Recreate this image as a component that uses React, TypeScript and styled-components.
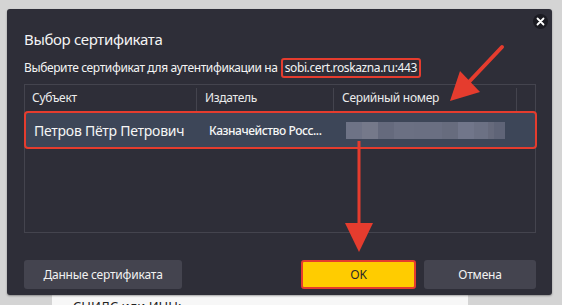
import React from "react";
import styled, { createGlobalStyle } from "styled-components";

const Global = createGlobalStyle`
  html, body { margin: 0; padding: 0; }
  body {
    background: #d4d4d4;
    font-family: "Noto Sans", "Open Sans", sans-serif;
    overflow: hidden;
  }
`;

const Page = styled.div`
  width: 562px;
  height: 305px;
  padding: 9px 0 0 7px;
  box-sizing: border-box;
  display: flex;
  flex-direction: column;
  align-items: flex-start;
`;

const Dialog = styled.div`
  position: relative;
  width: 545px;
  height: 286px;
  box-sizing: border-box;
  background: #2e2e38;
  border-radius: 3px;
  box-shadow: 0 1px 2px rgba(0, 0, 0, 0.35);
  padding: 19px 16px 0 17px;
  display: flex;
  flex-direction: column;
  color: #f2f2f2;
`;

const CloseButton = styled.div`
  position: absolute;
  top: 5px;
  right: 4px;
  width: 15px;
  height: 15px;
  border-radius: 50%;
  background: #1b1b22;
  display: flex;
  align-items: center;
  justify-content: center;
`;

const Title = styled.div`
  font-size: 15px;
  letter-spacing: -0.35px;
  line-height: 22px;
  color: #f4f4f4;
`;

const Subtitle = styled.div`
  margin-top: 8px;
  font-size: 12px;
  letter-spacing: -0.38px;
  line-height: 16px;
  color: #f4f4f4;
  display: flex;
  align-items: center;
  white-space: nowrap;
`;

const Domain = styled.span`
  margin-left: 3px;
  padding: 1px 2px;
  border: 2px solid #e53c2e;
  border-radius: 3px;
  line-height: 14px;
`;

const Table = styled.div`
  margin-top: 6px;
  width: 512px;
  height: 149px;
  box-sizing: border-box;
  border: 1px solid #44444e;
  display: flex;
  flex-direction: column;
`;

const HeaderRow = styled.div`
  display: grid;
  grid-template-columns: 171px 137px 183px 1fr;
  height: 23px;
  align-items: stretch;
  padding-top: 3px;
`;

const HeaderCell = styled.div<{ $first?: boolean }>`
  font-size: 12px;
  letter-spacing: -0.3px;
  line-height: 20px;
  color: #ececec;
  padding-left: ${(p) => (p.$first ? "7px" : "8px")};
  border-left: ${(p) => (p.$first ? "none" : "1px solid #44444e")};
  white-space: nowrap;
`;

const SelectedRow = styled.div`
  margin: 0 -2px 0 -1px;
  height: 38px;
  box-sizing: border-box;
  border: 2px solid #e53c2e;
  border-radius: 4px;
  background: #3d4658;
  display: grid;
  grid-template-columns: 183px 136px 1fr;
  align-items: center;
`;

const NameCell = styled.div`
  padding-left: 8px;
  font-size: 14px;
  letter-spacing: -0.25px;
  color: #f6f6f6;
  white-space: nowrap;
`;

const IssuerCell = styled.div`
  font-size: 12px;
  font-weight: 500;
  letter-spacing: -0.45px;
  color: #f6f6f6;
  white-space: nowrap;
`;

const Blur = styled.div`
  display: flex;
  height: 17px;
  width: 159px;
  margin-left: 1px;
`;

const BlurBlock = styled.div<{ $w: number; $c: string }>`
  width: ${(p) => p.$w}px;
  height: 100%;
  background: ${(p) => p.$c};
`;

const Footer = styled.div`
  margin-top: 27px;
  width: 512px;
  display: flex;
  align-items: center;
`;

const Button = styled.div<{ $w: number; $primary?: boolean }>`
  width: ${(p) => p.$w}px;
  height: 29px;
  box-sizing: border-box;
  border-radius: 3px;
  display: flex;
  align-items: center;
  justify-content: center;
  font-size: 12px;
  letter-spacing: -0.2px;
  background: ${(p) => (p.$primary ? "#ffcc00" : "#44444f")};
  color: ${(p) => (p.$primary ? "#2a2a2a" : "#f2f2f2")};
  border: ${(p) => (p.$primary ? "2px solid #e53c2e" : "none")};
`;

const Spacer = styled.div`
  flex: 1;
`;

const Gap = styled.div`
  width: 8px;
`;

const Overlay = styled.svg`
  position: absolute;
  left: 0;
  top: 0;
  pointer-events: none;
`;

const Strip = styled.div`
  margin-left: 45px;
  width: 416px;
  height: 10px;
  background: #f7f7f7;
  overflow: hidden;
`;

const StripText = styled.div`
  padding: 4px 0 0 21px;
  font-size: 13px;
  line-height: 14px;
  color: #222;
`;

const serialBlocks: [number, string][] = [
  [16, "#6e7386"],
  [16, "#75798a"],
  [16, "#656a7d"],
  [20, "#6b7083"],
  [28, "#6a6f82"],
  [16, "#676c7e"],
  [16, "#71768a"],
  [14, "#6c7184"],
  [6, "#666a7c"],
  [11, "#5f6477"],
];

export default function App() {
  return (
    <>
      <Global />
      <Page>
        <Dialog>
          <CloseButton>
            <svg width="9" height="9" viewBox="0 0 9 9">
              <path d="M1.5 1.5 L7.5 7.5 M7.5 1.5 L1.5 7.5" stroke="#ffffff" strokeWidth="1.8" strokeLinecap="round" />
            </svg>
          </CloseButton>
          <Title>Выбор сертификата</Title>
          <Subtitle>
            Выберите сертификат для аутентификации на
            <Domain>sobi.cert.roskazna.ru:443</Domain>
          </Subtitle>
          <Table>
            <HeaderRow>
              <HeaderCell $first>Субъект</HeaderCell>
              <HeaderCell>Издатель</HeaderCell>
              <HeaderCell>Серийный номер</HeaderCell>
              <HeaderCell />
            </HeaderRow>
            <SelectedRow>
              <NameCell>Петров Пётр Петрович</NameCell>
              <IssuerCell>Казначейство Росс...</IssuerCell>
              <Blur>
                {serialBlocks.map(([w, c], i) => (
                  <BlurBlock key={i} $w={w} $c={c} />
                ))}
              </Blur>
            </SelectedRow>
          </Table>
          <Footer>
            <Button $w={158}>Данные сертификата</Button>
            <Spacer />
            <Button $w={115} $primary>OK</Button>
            <Gap />
            <Button $w={112}>Отмена</Button>
          </Footer>
          <Overlay width="545" height="286" viewBox="0 0 545 286">
            <line x1="495" y1="38" x2="460" y2="75" stroke="#e53c2e" strokeWidth="4" strokeLinecap="round" />
            <polygon points="443,92 453,62 473,83" fill="#e53c2e" />
            <line x1="352" y1="132" x2="352" y2="220" stroke="#e53c2e" strokeWidth="3" />
            <polygon points="338,214 366,214 352,243" fill="#e53c2e" />
          </Overlay>
        </Dialog>
        <Strip>
          <StripText>СНИЛС или ИНН:</StripText>
        </Strip>
      </Page>
    </>
  );
}
